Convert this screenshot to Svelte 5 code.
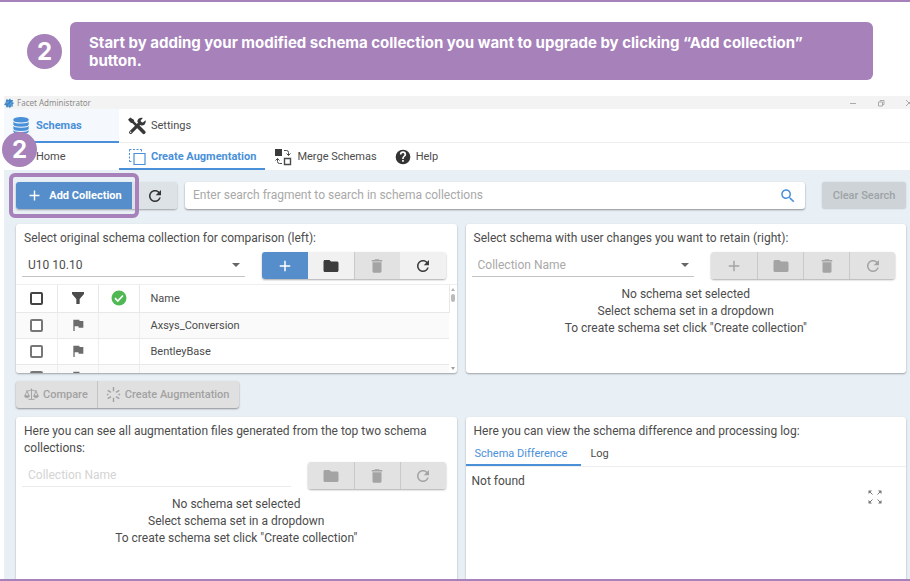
<script>
  const paths = {
    plus: 'M19 13h-6v6h-2v-6H5v-2h6V5h2v6h6z',
    folder: 'M10 4H4c-1.1 0-2 .9-2 2v12c0 1.1.9 2 2 2h16c1.1 0 2-.9 2-2V8c0-1.1-.9-2-2-2h-8z',
    trash: 'M6 19c0 1.100.9 2 2 2h8c1.100 0 2-.9 2-2V7H6zM19 4h-3.500l-1-1h-5l-1 1H5v2h14z',
    refresh: 'M17.650 6.350C16.200 4.900 14.210 4 12 4c-4.420 0-7.990 3.580-7.990 8s3.570 8 7.990 8c3.730 0 6.840-2.550 7.730-6h-2.080c-.820 2.330-3.040 4-5.650 4-3.310 0-6-2.690-6-6s2.690-6 6-6c1.660 0 3.140.690 4.220 1.780L13 11h7V4z',
    search: 'M15.500 14h-.790l-.280-.270C15.410 12.590 16 11.110 16 9.500 16 5.910 13.090 3 9.500 3S3 5.910 3 9.500 5.910 16 9.500 16c1.610 0 3.090-.590 4.230-1.570l.270.280v.790l5 4.990L20.490 19zm-6 0C7.010 14 5 11.990 5 9.500S7.010 5 9.500 5 14 7.010 14 9.500 11.990 14 9.500 14z',
    flag: 'M14.400 6 14 4H5v17h2v-7h5.600l.4 2h7V6z',
    funnel: 'M3 3h18v3l-6.500 7.500V21h-5v-7.500L3 6z',
    help: 'M12 1a11 11 0 1 0 0 22 11 11 0 0 0 0-22zm1.200 18h-2.500v-2.500h2.500zm2.300-8.300-1 1c-.9.900-1.300 1.500-1.300 3.200h-2.500v-.6c0-1.300.5-2.300 1.300-3.100l1.400-1.400a2.200 2.200 0 1 0-3.700-1.600H7.300a4.700 4.700 0 1 1 9.400 0c0 1-.5 1.800-1.200 2.500z'
  };
  const names = ['Axsys_Conversion', 'BentleyBase', ''];
  const emptyLines = ['No schema set selected', 'Select schema set in a dropdown', 'To create schema set click "Create collection"'];
  const labels = { plus: 'Add', folder: 'Open folder', trash: 'Delete', refresh: 'Refresh' };
  let query = $state('');
</script>

{#snippet icon(name)}
  <svg class="icon" viewBox="0 0 24 24" aria-hidden="true"><path d={paths[name]} fill="currentColor" /></svg>
{/snippet}

{#snippet tools(items)}
  <div class="tools">
    {#each items as item}
      <button type="button" class={item.kind} disabled={item.kind === 'off'} aria-label={labels[item.icon]}>{@render icon(item.icon)}</button>
    {/each}
  </div>
{/snippet}

{#snippet arrow()}
  <svg class="arrow" viewBox="0 0 8 4" aria-hidden="true"><path d="M0 0h8L4 4z" fill="currentColor" /></svg>
{/snippet}

{#snippet empty()}
  <div class="empty">
    {#each emptyLines as line}<p>{line}</p>{/each}
  </div>
{/snippet}

<div class="page">
  <header class="step">
    <span class="badge">2</span>
    <p class="banner">Start by adding your modified schema collection you want to upgrade by clicking “Add collection” button.</p>
  </header>

  <div class="app">
    <div class="titlebar">
      <svg class="gear" viewBox="0 0 20 20" aria-hidden="true">
        <path d="M5 2l4 2 3-3 2 3 4 0-1 4 3 2-3 3 1 4-4 0-2 3-3-2-4 1-1-4-4-2 3-3z" fill="#3f86c6" />
        <path d="M2 9l5 1 2-4M18 8l-5 3 2 5M9 18l1-5" fill="none" stroke="#8cc0ea" stroke-width="1.200" />
      </svg>
      <span>Facet Administrator</span>
      <div class="window">
        <svg viewBox="0 0 8 8" aria-hidden="true"><path d="M1 4.500h6" /></svg>
        <svg viewBox="0 0 8 8" aria-hidden="true"><path d="M1.500 3h4v4h-4zM3 2.500V1.500h4v4H6" /></svg>
        <svg viewBox="0 0 8 8" aria-hidden="true"><path d="M1 1l6 6M7 1L1 7" /></svg>
      </div>
    </div>

    <nav class="tabs main">
      <a href="#schemas" class="first active">
        <svg class="db" viewBox="0 0 18 20" aria-hidden="true">
          <path d="M0 3v14c0 1.700 4 3 9 3s9-1.300 9-3V3z" fill="#4a90d9" />
          <ellipse cx="9" cy="3" rx="9" ry="3" fill="#4a90d9" />
          <path d="M0 4.500c0 1.700 4 2.500 9 2.500s9-.8 9-2.500M0 9.500c0 1.700 4 2.500 9 2.500s9-.8 9-2.500M0 14.500c0 1.700 4 2.500 9 2.500s9-.8 9-2.500" fill="none" stroke="#f5f8fc" stroke-width="1.200" />
        </svg>
        Schemas
      </a>
      <a href="#settings">
        <svg class="pic" viewBox="0 0 20 20" aria-hidden="true">
          <path d="M13.500 6.500 3 17" stroke="#383838" stroke-width="3.600" stroke-linecap="round" />
          <path d="M19.500 3.500 16.500 6l-2-.5L14 4l2.500-3c-3-1-6.500 1-6 4.500L14.500 9.500C18 10 20.500 7 19.500 3.500z" fill="#383838" />
          <path d="M0 3 2.500.5l4 2.500.5 2L11 9 9 11 5 7l-2-.5z" fill="#383838" />
          <path d="M12 11.500 17.500 17" stroke="#383838" stroke-width="4" stroke-linecap="round" />
          <circle cx="3" cy="17" r=".8" fill="#fff" />
        </svg>
        Settings
      </a>
    </nav>

    <nav class="tabs sub">
      <a href="#home" class="first home">Home</a>
      <a href="#augment" class="active">
        <svg class="pic" viewBox="0 0 18 18" aria-hidden="true" fill="none" stroke="#4a90d9">
          <path d="M1.500 1.500h12M1.500 1.500v12M13.500 1.500v3M1.500 13.500h3" stroke-dasharray="2 1.500" />
          <path d="M6 5.500h11v11H6z" stroke-width="1.200" />
        </svg>
        Create Augmentation
      </a>
      <a href="#merge">
        <svg class="pic" viewBox="0 0 18 18" aria-hidden="true" fill="none" stroke="#4a4a4a">
          <path d="M1 1h7v7H1z" fill="#3a3a3a" stroke="none" />
          <path d="M10.500 10.500h6v6h-6z" stroke-width="1.400" />
          <path d="M10 2.500h2.500q2 0 2 2v3M12.500 5.500l2 2 2-2M8 15.500H5.500q-2 0-2-2v-3M1.500 12.500l2-2 2 2" />
        </svg>
        Merge Schemas
      </a>
      <a href="#help"><span class="help">{@render icon('help')}</span>Help</a>
    </nav>

    <main>
      <div class="toolbar">
        <div class="adders">
          <button type="button" class="add">{@render icon('plus')}Add Collection</button>
          <button type="button" class="reload" aria-label="Refresh">{@render icon('refresh')}</button>
          <span class="highlight"></span>
          <span class="badge over">2</span>
        </div>
        <label class="search">
          <input type="text" aria-label="Search" placeholder="Enter search fragment to search in schema collections" bind:value={query} />
          {@render icon('search')}
        </label>
        <button type="button" class="clear" disabled>Clear Search</button>
      </div>

      <div class="row">
        <section class="card">
          <h2>Select original schema collection for comparison (left):</h2>
          <div class="field">
            <div class="pick">
              <select aria-label="Original schema collection"><option>U10 10.10</option></select>
              {@render arrow()}
            </div>
            {@render tools([{ icon: 'plus', kind: 'primary' }, { icon: 'folder', kind: 'on' }, { icon: 'trash', kind: 'off' }, { icon: 'refresh', kind: 'on' }])}
          </div>
          <div class="list">
            <table>
              <thead>
                <tr>
                  <th class="c1"><input type="checkbox" aria-label="Select all" /></th>
                  <th class="c2">{@render icon('funnel')}</th>
                  <th class="c3">
                    <svg class="ok" viewBox="0 0 16 16" aria-hidden="true"><circle cx="8" cy="8" r="7.500" fill="#4fb853" /><path d="M4 8.200l2.800 2.800L12 5.500" fill="none" stroke="#fff" stroke-width="1.700" /></svg>
                  </th>
                  <th class="name">Name</th>
                </tr>
              </thead>
              <tbody>
                {#each names as name}
                  <tr>
                    <td><input type="checkbox" aria-label="Select row" /></td>
                    <td>{@render icon('flag')}</td>
                    <td></td>
                    <td class="name">{name}</td>
                  </tr>
                {/each}
              </tbody>
            </table>
            <div class="scroll">
              <svg viewBox="0 0 6 4" aria-hidden="true"><path d="M1 4h4L3 1z" fill="#b4b4b4" /></svg>
              <i></i>
              <svg class="down" viewBox="0 0 6 4" aria-hidden="true"><path d="M1 0h4L3 3z" fill="#a0a0a0" /></svg>
            </div>
          </div>
        </section>

        <section class="card">
          <h2>Select schema with user changes you want to retain (right):</h2>
          <div class="field">
            <div class="pick">
              <select class="blank" aria-label="Changed schema collection"><option>Collection Name</option></select>
              {@render arrow()}
            </div>
            {@render tools([{ icon: 'plus', kind: 'off' }, { icon: 'folder', kind: 'off' }, { icon: 'trash', kind: 'off' }, { icon: 'refresh', kind: 'off' }])}
          </div>
          {@render empty()}
        </section>
      </div>

      <div class="actions">
        <button type="button" disabled>
          <svg class="act" viewBox="0 0 20 18" aria-hidden="true" fill="none" stroke="currentColor" stroke-width="1.300">
            <path d="M3 4c3 1 5-1 7-1s4 2 7 1M10 1v14M6 15.500h8M4 4.500l-3 6.500h6zM16 4.500l-3 6.500h6z" />
            <path d="M1 11c.5 3 5.500 3 6 0zM13 11c.5 3 5.500 3 6 0z" fill="currentColor" />
          </svg>
          Compare
        </button>
        <button type="button" disabled>
          <svg class="act" viewBox="0 0 18 18" aria-hidden="true" fill="none" stroke="currentColor" stroke-width="1.700">
            <path d="M9 0v5M9 13v5M2 4l4 2.500M16 4l-4 2.500M2 14l4-2.500M16 14l-4-2.500M1 9h2M17 9h-2" />
          </svg>
          Create Augmentation
        </button>
      </div>

      <div class="row grow">
        <section class="card">
          <h2>Here you can see all augmentation files generated from the top two schema collections:</h2>
          <div class="field">
            <div class="pick faint">
              <input type="text" aria-label="Collection name" placeholder="Collection Name" disabled />
            </div>
            {@render tools([{ icon: 'folder', kind: 'off' }, { icon: 'trash', kind: 'off' }, { icon: 'refresh', kind: 'off' }])}
          </div>
          {@render empty()}
        </section>

        <section class="card">
          <h2>Here you can view the schema difference and processing log:</h2>
          <nav class="views">
            <a href="#difference" class="active">Schema Difference</a>
            <a href="#log">Log</a>
          </nav>
          <div class="output">
            <p>Not found</p>
            <button type="button" aria-label="Full screen">
              <svg viewBox="0 0 14 14" aria-hidden="true" fill="currentColor" stroke="currentColor">
                <path d="M.5.500h3.500L.5 4zM13.500.500V4L10 .5zM.5 13.500V10L4 13.500zM13.500 13.500H10l3.500-3.500z" stroke="none" />
                <path d="M1.500 1.500l3 3M12.500 1.500l-3 3M1.500 12.500l3-3M12.500 12.500l-3-3" />
              </svg>
            </button>
          </div>
        </section>
      </div>
    </main>
  </div>
</div>

<style>
  :global(body) { margin: 0; background: #fff; }
  * { box-sizing: border-box; }
  .page {
    min-height: 100vh;
    display: flex;
    flex-direction: column;
    border-top: 2px solid #a681ba;
    border-bottom: 2px solid #a681ba;
    font: 12px/17px Roboto, "Liberation Sans", sans-serif;
    color: #4c4c4c;
    overflow: hidden;
  }
  p, h2 { margin: 0; font-size: 12px; font-weight: 400; }
  button, input, select { font: inherit; color: inherit; }
  button { border: 0; padding: 0; display: flex; align-items: center; justify-content: center; }
  a { color: inherit; text-decoration: none; }
  svg { display: block; flex: none; }
  .icon { width: 18px; height: 18px; }

  .step { display: flex; align-items: center; gap: 8px; padding: 20px 37px 16px 27px; }
  .badge {
    flex: none;
    width: 35px;
    height: 35px;
    border-radius: 50%;
    background: #a681ba;
    color: #fff;
    font: 700 24px/35px Inter, sans-serif;
    text-align: center;
  }
  .banner {
    flex: 1;
    padding: 12px 19px 10px;
    border-radius: 6px;
    background: #a681ba;
    color: #fff;
    font: 700 15px/18px Inter, sans-serif;
  }

  .app { flex: 1; display: flex; flex-direction: column; margin-left: 4px; }
  .titlebar { display: flex; align-items: center; gap: 3px; height: 13px; background: #f3f3f3; font: 8px/12px "Noto Sans", sans-serif; color: #8c8c8c; }
  .gear { width: 10px; height: 10px; }
  .window { margin-left: auto; margin-right: -3px; display: flex; gap: 20px; }
  .window svg { width: 8px; height: 8px; fill: none; stroke: #aaa; }

  .tabs { display: flex; font-size: 11px; border-bottom: 1px solid #eee; }
  .tabs a { display: flex; align-items: center; gap: 5px; padding: 0 9px; border-bottom: 2px solid transparent; margin-bottom: -1px; }
  .tabs .first { width: 115px; }
  .tabs .active { color: #4a90d9; font-weight: 700; border-color: #4a90d9; }
  .main { height: 34px; }
  .main a { padding-top: 1px; }
  .main .first { gap: 7px; background: #f5f8fc; }
  .sub { height: 27px; border-bottom: 0; }
  .sub a { margin-bottom: 0; padding-top: 2px; }
  .sub .home { padding-left: 32px; }
  .db { width: 16px; height: 17px; }
  .pic { width: 18px; height: 18px; }
  .help .icon { width: 16px; height: 16px; color: #333; }

  main { flex: 1; display: flex; flex-direction: column; padding: 12px 4px 0 12px; background: #e8eff5; }
  .toolbar { display: flex; height: 27px; }
  .adders { position: relative; display: flex; box-shadow: 0 1px 2px #0005; border-radius: 3px; }
  .add { gap: 6px; width: 116px; border-radius: 3px 0 0 3px; background: #568ecb; color: #fff; font-size: 11px; font-weight: 700; }
  .add .icon { width: 17px; height: 17px; }
  .reload { width: 45px; border-radius: 0 3px 3px 0; background: #dde2e7; }
  .reload .icon { color: #333; }
  .highlight { position: absolute; left: -7px; top: -9px; width: 130px; height: 45px; border: 4px solid #a681ba; border-radius: 6px; }
  .over { position: absolute; left: -14px; top: -50px; }
  .search { flex: 1; display: flex; align-items: center; margin: 0 17px 0 8px; padding: 0 8px; border-radius: 3px; background: #fff; box-shadow: 0 1px 2px #0006; color: #4a90d9; }
  .search input { flex: 1; min-width: 0; border: 0; padding: 0; outline: 0; background: none; color: #4c4c4c; }
  input::placeholder { color: #a9a9a9; opacity: 1; }
  .clear { width: 84px; border-radius: 3px; background: #cdd3d6; color: #9da3a6; font-size: 11px; font-weight: 500; box-shadow: 0 0 2px #0002; }

  .row { display: grid; grid-template-columns: 1fr 1fr; gap: 9px; margin-top: 15px; }
  .card { display: flex; flex-direction: column; min-height: 149px; border-radius: 3px; background: #fff; box-shadow: 0 1px 2px #0005; overflow: hidden; }
  .card h2 { padding: 6px 8px 0; }
  .field { display: flex; align-items: flex-start; gap: 17px; padding: 5px 11px 0 6px; }
  .pick { flex: 1; display: flex; align-items: center; height: 25px; padding-top: 2px; border-bottom: 1px solid #c4c4c4; }
  .pick select, .pick input { flex: 1; min-width: 0; height: 22px; padding: 0 6px; border: 0; outline: 0; appearance: none; background: none; }
  .pick .blank { color: #a9a9a9; }
  .faint { border-color: #ebebeb; }
  .faint input::placeholder { color: #d4d4d4; }
  .arrow { width: 8px; height: 4px; margin-right: 5px; color: #666; }
  .tools { display: flex; border-radius: 3px; box-shadow: 0 1px 2px #0005; overflow: hidden; }
  .tools button { width: 46px; height: 27px; background: #f1f1f1; color: #3c3c3c; }
  .tools .primary { background: #568ecb; color: #fff; }
  .tools .off { background: #e2e2e2; color: #a4a4a4; border-left: 1px solid #c9c9c9; }
  .tools .off:first-child { border-left: 0; }

  .list { display: flex; height: 89px; margin-top: 5px; border-top: 1px solid #eee; overflow: hidden; }
  table { flex: 1; align-self: flex-start; border-collapse: collapse; table-layout: fixed; font-size: 11px; }
  tr { height: 27px; }
  tbody tr { height: 26px; }
  tbody tr:nth-child(odd) { background: #fafafa; }
  th, td { padding: 0; border-right: 1px solid #e8e8e8; border-bottom: 1px solid #e8e8e8; font-weight: 400; }
  td:not(:last-child) { border-right-color: #eee; }
  .c1, .c2, .c3 { width: 41px; }
  .name { padding-left: 11px; text-align: left; }
  td.name { border-right: 0; }
  th .icon, td .icon, .ok { margin: 0 auto; width: 16px; height: 16px; }
  td .icon { color: #6c6c6c; }
  input[type='checkbox'] { appearance: none; display: block; width: 13px; height: 13px; margin: 0 auto; border: 2px solid #777; border-radius: 2px; background: #fff; }
  th input[type='checkbox'] { border-color: #444; }
  .scroll { display: flex; flex-direction: column; align-items: center; width: 7px; padding: 2px 0; }
  .scroll svg { width: 6px; height: 4px; }
  .scroll i { width: 4px; height: 8px; margin-top: 3px; border-radius: 2px; background: #bbb; }
  .scroll .down { margin-top: auto; }
  .empty { padding-top: 7px; text-align: center; }

  .actions { display: flex; align-self: flex-start; margin-top: 8px; border-radius: 3px; background: #e0e0e0; box-shadow: 0 1px 2px #0006; }
  .actions button { gap: 4px; height: 27px; padding: 0 9px 0 8px; background: none; color: #a2a2a2; font-size: 11px; font-weight: 500; }
  .actions button + button { border-left: 1px solid #c4c4c4; }
  .act { width: 15px; height: 15px; }

  .grow { flex: 1; margin-top: 9px; }
  .grow .card { border-radius: 3px 3px 0 0; }
  .views { display: flex; margin-top: 1px; border-bottom: 1px solid #eee; font-size: 11px; }
  .views a { height: 25px; padding: 4px 14px 0 9px; border-bottom: 2px solid transparent; }
  .views .active { color: #4a90d9; border-color: #4a90d9; }
  .output { display: flex; justify-content: space-between; padding: 6px 24px 0 6px; }
  .output button { align-self: flex-start; margin-top: 17px; background: none; color: #777; }
  .output svg { width: 14px; height: 14px; }
</style>
